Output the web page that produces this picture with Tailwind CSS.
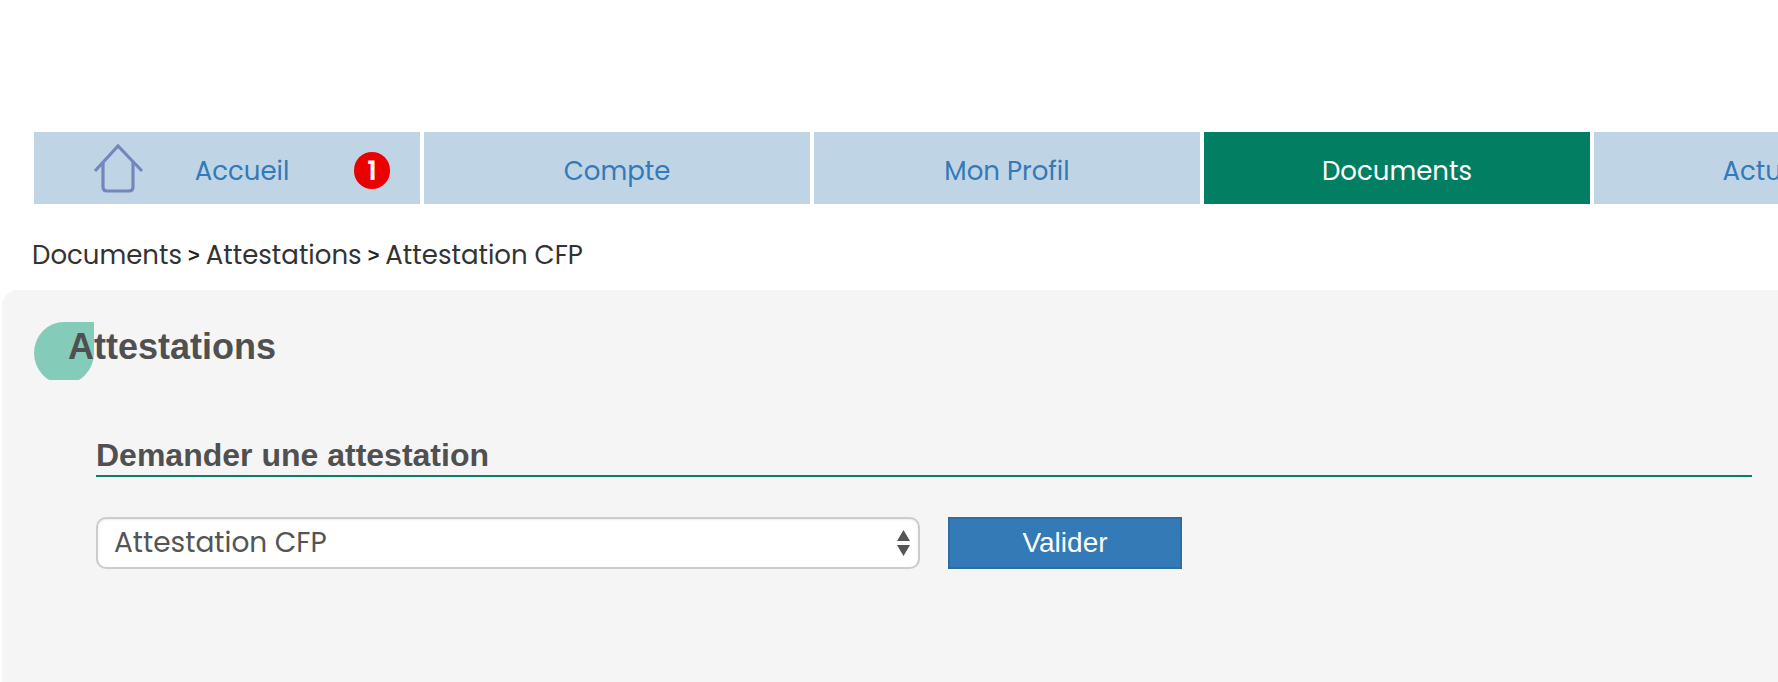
<!DOCTYPE html>
<html><head><meta charset="utf-8"><script src="https://cdn.jsdelivr.net/npm/@tailwindcss/browser@4"></script></head>
<body class="bg-white overflow-hidden w-[1778px] h-[682px] font-['Poppins','Open_Sans','Noto_Sans',sans-serif]">
<div class="pt-[132px]">
<nav class="flex pl-[34px] gap-[4px] w-[1778px] overflow-hidden text-[26px] text-[#337ab7]">
<a class="relative shrink-0 w-[386px] h-[72px] pt-[7px] bg-[#bfd5e6] flex items-center justify-center">
<svg class="absolute left-[58px] top-[12px] blur-[0.5px]" width="53" height="50" viewBox="0 0 53 50" fill="none" stroke="#7486bf" stroke-width="3.2"><path d="M3 27 L26 2 L50 27"/><path d="M11 18 V43 Q11 47 15 47 H37 Q41 47 41 43 V18"/></svg>
<span class="ml-[30px]">Accueil</span>
<span class="absolute left-[320px] top-[20px] w-[36px] h-[37px] rounded-full bg-[#ea0000] text-white text-[26px] leading-none font-semibold flex items-center justify-center">1</span></a>
<a class="shrink-0 w-[386px] h-[72px] pt-[7px] bg-[#bfd5e6] flex items-center justify-center">Compte</a>
<a class="shrink-0 w-[386px] h-[72px] pt-[7px] bg-[#bfd5e6] flex items-center justify-center">Mon Profil</a>
<a class="shrink-0 w-[386px] h-[72px] pt-[7px] bg-[#027e63] text-white flex items-center justify-center">Documents</a>
<a class="shrink-0 w-[386px] h-[72px] pt-[7px] bg-[#bfd5e6] flex items-center justify-center">Actualités</a>
</nav>
<div class="flex items-center gap-[6px] pl-[32px] mt-[33px] text-[26px] leading-[36px] text-[#333]"><span>Documents</span><span class="font-['Liberation_Sans'] font-bold text-[20px] text-[#222]">&gt;</span><span>Attestations</span><span class="font-['Liberation_Sans'] font-bold text-[20px] text-[#222]">&gt;</span><span>Attestation CFP</span></div>
<main class="relative mt-[17px] ml-[2px] h-[400px] bg-[#f5f5f5] rounded-tl-[16px]">
<div class="absolute left-[32px] top-[32px] w-[60px] h-[58px] overflow-hidden"><div class="w-[60px] h-[62px] bg-[#84cbb9] rounded-[50%] rounded-tr-none"></div></div>
<h1 class="relative pl-[66px] pt-[37px] font-['Liberation_Sans'] font-bold text-[36px] leading-[40px] text-[#505050]">Attestations</h1>
<div class="ml-[94px] mt-[72px] w-[1656px] border-b-2 border-[#0e7c66] pb-[4px] font-['Liberation_Sans'] font-bold text-[32px] leading-[32px] text-[#505050]">Demander une attestation</div>
<div class="ml-[94px] mt-[40px] flex gap-[28px]">
<div class="relative w-[824px] h-[52px] bg-white border-2 border-[#ccc] rounded-[10px] shadow-[inset_0_1px_2px_rgba(0,0,0,0.08)] px-[16px] flex items-center text-[28px] text-[#555]">Attestation CFP
<svg class="absolute right-[8px] top-[11px]" width="13" height="26" viewBox="0 0 13 26" fill="#555"><path d="M6.5 0 L13 11 H0Z M6.5 26 L13 15 H0Z"/></svg></div>
<button class="w-[234px] h-[52px] bg-[#337ab7] border-2 border-[#2e6da4] text-white font-['Liberation_Sans'] text-[28px]">Valider</button>
</div>
</main>
</div>
</body></html>
